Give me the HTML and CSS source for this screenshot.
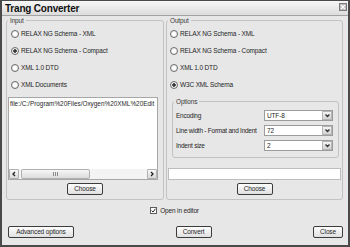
FILE: index.html
```html
<!DOCTYPE html>
<html>
<head>
    <title>Trang Converter</title>
    <link rel="stylesheet" href="styles.css">
</head>
<body>
    <div class="window">
        <div class="titlebar">
            <span class="title">Trang Converter</span>
            <span class="close-btn">
                <svg width="6" height="6" viewBox="0 0 6 6"><path d="M1 1 L5 5 M5 1 L1 5" stroke="#fafafa" stroke-width="1.4"/></svg>
            </span>
        </div>

        <div class="dialog">
            <div class="columns">
                <fieldset class="group input-group">
                    <legend>Input</legend>
                    <div class="radio-list">
                        <label class="radio-row"><span class="radio"></span>RELAX NG Schema - XML</label>
                        <label class="radio-row"><span class="radio checked"></span>RELAX NG Schema - Compact</label>
                        <label class="radio-row"><span class="radio"></span>XML 1.0 DTD</label>
                        <label class="radio-row"><span class="radio"></span>XML Documents</label>
                    </div>
                    <div class="file-box">
                        <div class="file-text">file:/C:/Program%20Files/Oxygen%20XML%20Edit</div>
                        <div class="hscroll">
                            <span class="sb-arrow">
                                <svg width="6" height="6" viewBox="0 0 6 6"><path d="M4 1 L2 3 L4 5" fill="none" stroke="#222" stroke-width="1.3"/></svg>
                            </span>
                            <div class="sb-track">
                                <span class="sb-thumb"><span class="grip"></span></span>
                            </div>
                            <span class="sb-arrow">
                                <svg width="6" height="6" viewBox="0 0 6 6"><path d="M2 1 L4 3 L2 5" fill="none" stroke="#222" stroke-width="1.3"/></svg>
                            </span>
                        </div>
                    </div>
                    <div class="btn-row"><button class="btn btn-choose">Choose</button></div>
                </fieldset>

                <fieldset class="group output-group">
                    <legend>Output</legend>
                    <div class="radio-list">
                        <label class="radio-row"><span class="radio"></span>RELAX NG Schema - XML</label>
                        <label class="radio-row"><span class="radio"></span>RELAX NG Schema - Compact</label>
                        <label class="radio-row"><span class="radio"></span>XML 1.0 DTD</label>
                        <label class="radio-row"><span class="radio checked"></span>W3C XML Schema</label>
                    </div>
                    <fieldset class="group options">
                        <legend>Options</legend>
                        <div class="option-grid">
                            <span class="option-label">Encoding</span>
                            <div class="combo"><span class="combo-value">UTF-8</span><span class="combo-btn"><svg width="7" height="5" viewBox="0 0 7 5"><path d="M1.5 1.5 L3.5 3.5 L5.5 1.5" fill="none" stroke="#333" stroke-width="1.3"/></svg></span></div>
                            <span class="option-label">Line width - Format and Indent</span>
                            <div class="combo"><span class="combo-value">72</span><span class="combo-btn"><svg width="7" height="5" viewBox="0 0 7 5"><path d="M1.5 1.5 L3.5 3.5 L5.5 1.5" fill="none" stroke="#333" stroke-width="1.3"/></svg></span></div>
                            <span class="option-label">Indent size</span>
                            <div class="combo"><span class="combo-value">2</span><span class="combo-btn"><svg width="7" height="5" viewBox="0 0 7 5"><path d="M1.5 1.5 L3.5 3.5 L5.5 1.5" fill="none" stroke="#333" stroke-width="1.3"/></svg></span></div>
                        </div>
                    </fieldset>
                    <div class="text-field"></div>
                    <div class="btn-row"><button class="btn btn-choose">Choose</button></div>
                </fieldset>
            </div>

            <label class="check-row">
                <span class="checkbox"><svg width="5" height="5" viewBox="0 0 5 5"><path d="M0.6 2.6 L2 4 L4.4 0.8" fill="none" stroke="#222" stroke-width="1"/></svg></span>
                Open in editor
            </label>

            <div class="bottom-row">
                <button class="btn btn-advanced">Advanced options</button>
                <button class="btn btn-convert">Convert</button>
                <button class="btn btn-close">Close</button>
            </div>
        </div>
    </div>
</body>
</html>
```

FILE: styles.css
```css
* { box-sizing: border-box; }
body { margin: 0; font-family: "Liberation Sans", Arial, sans-serif; font-size: 6.5px; letter-spacing: -0.15px; color: #1f1f1f; }

.window {
    width: 350px;
    height: 247px;
    border: 2px solid #4a4a4a;
    border-top-width: 1px;
    background: #e7e7e7;
    display: flex;
    flex-direction: column;
}
.titlebar {
    height: 15px;
    flex: none;
    display: flex;
    align-items: center;
    justify-content: space-between;
    padding: 0 1px 0 3px;
    background: linear-gradient(#f7f7f7, #dcdcdc);
    border-bottom: 1px solid #a3a3a3;
}
.title { font-size: 10px; font-weight: bold; letter-spacing: -0.2px; color: #111; }
.close-btn {
    width: 8px;
    height: 8px;
    margin-top: -2px;
    border: 1px solid #7a7a7a;
    background: #b9b9b9;
    display: flex;
    align-items: center;
    justify-content: center;
}

.dialog { flex: 1; display: flex; flex-direction: column; padding: 1px 5px 0 4px; }
.columns { display: flex; gap: 2px; }

.group {
    margin: 0;
    padding: 0;
    min-width: 0;
    border: 1px solid #c2c2c2;
    border-radius: 3px;
}
.group legend { margin-left: 1px; padding: 0 2px; line-height: 7px; color: #3a3a3a; }
.input-group { width: 158px; height: 183px; }
.output-group { width: 177px; height: 183px; }

.radio-list { padding-top: 1px; }
.input-group .radio-list { padding-left: 4px; }
.output-group .radio-list { padding-left: 3px; }
.radio-row { display: flex; align-items: center; gap: 2px; height: 17px; }
.radio {
    width: 8px;
    height: 8px;
    border-radius: 50%;
    border: 1px solid #6c6c6c;
    background: radial-gradient(circle, #ffffff 30%, #dcdcdc);
}
.radio.checked { background: radial-gradient(circle, #3a3a3a 0 1.5px, #f6f6f6 2px, #dcdcdc); }

.file-box {
    margin: 4px 5px 0 1px;
    height: 83px;
    background: #fff;
    border: 1px solid #a6a6a6;
    display: flex;
    flex-direction: column;
}
.file-text { flex: 1; padding: 2px 0 0 1px; white-space: nowrap; overflow: hidden; font-size: 6.4px; letter-spacing: 0; line-height: 8px; }
.hscroll { height: 10px; display: flex; background: #f3f3f3; }
.sb-arrow {
    width: 10px;
    border: 1px solid #b0b0b0;
    border-radius: 1px;
    background: linear-gradient(#f8f8f8, #dadada);
    display: flex;
    align-items: center;
    justify-content: center;
}
.sb-track { flex: 1; display: flex; padding-left: 2px; }
.sb-thumb {
    width: 69px;
    border: 1px solid #b0b0b0;
    border-radius: 2px;
    background: linear-gradient(#f6f6f6, #dcdcdc);
    display: flex;
    align-items: center;
    justify-content: center;
}
.grip { width: 5px; height: 4px; background: repeating-linear-gradient(90deg, #8a8a8a 0 1px, transparent 1px 2px); }

.btn-row { display: flex; justify-content: center; margin-top: 3px; }
.btn {
    height: 12px;
    padding: 0;
    border: 1px solid #3c3c3c;
    border-radius: 2px;
    background: linear-gradient(#fdfdfd, #e0e0e0);
    font: inherit;
    letter-spacing: -0.15px;
    line-height: 10px;
    color: #1f1f1f;
}
.btn-choose { width: 36px; }
.btn-advanced { width: 66px; }
.btn-convert { width: 36px; }
.btn-close { width: 30px; }

.options { margin: 5px 3px 0 5px; }
.option-grid {
    display: grid;
    grid-template-columns: 1fr 69px;
    grid-auto-rows: 15px;
    align-items: center;
    padding: 3px 5px 4px 3px;
}
.option-label { white-space: nowrap; letter-spacing: -0.25px; }
.combo { height: 11px; border: 1px solid #9c9c9c; background: #fff; display: flex; }
.combo-value { flex: 1; padding-left: 2px; line-height: 9px; }
.combo-btn {
    width: 10px;
    border: 1px solid #b5b5b5;
    background: linear-gradient(#f4f4f4, #d2d2d2);
    display: flex;
    align-items: center;
    justify-content: center;
}

.text-field { margin: 10px 1px 0 1px; height: 12px; background: #fff; border: 1px solid #bdbdbd; }

.check-row { display: flex; justify-content: center; align-items: center; gap: 3px; height: 12px; margin-top: 4px; }
.checkbox {
    width: 7px;
    height: 7px;
    border: 1px solid #5c5c5c;
    background: #fff;
    display: flex;
    align-items: center;
    justify-content: center;
}

.bottom-row { display: flex; justify-content: space-between; margin-top: 10px; padding: 0 0 0 2px; }
```
